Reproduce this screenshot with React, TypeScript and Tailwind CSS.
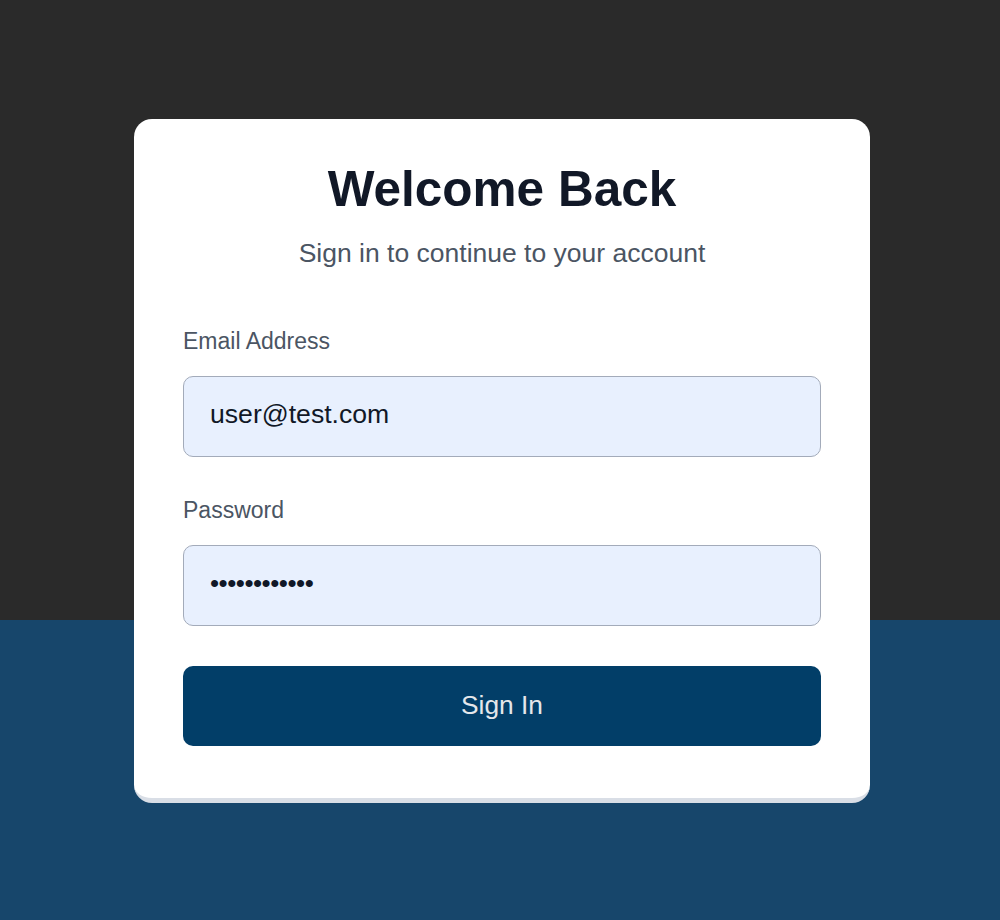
import React from 'react';

const App: React.FC = () => {
  return (
    <div className="min-h-[920px] w-full bg-[linear-gradient(to_bottom,#2a2a2a_620px,#17466b_620px)] pt-[119px] font-['Liberation_Sans',Arial,sans-serif]">
      {/* Login card */}
      <div className="ml-[134px] w-[736px] rounded-[18px] border-b-[5px] border-[#d9dee6] bg-white px-[49px] pt-[42px] pb-[52px]">
        <h1 className="text-center text-[49.5px] leading-[56px] font-bold text-[#111827]">Welcome Back</h1>
        <p className="mt-[21px] text-center text-[26.5px] leading-[30px] text-[#4b5563]">
          Sign in to continue to your account
        </p>

        <form className="mt-[59px]" onSubmit={(e) => e.preventDefault()}>
          <label className="block text-[23px] leading-[28px] text-[#4b5563]">Email Address</label>
          <input
            type="email"
            readOnly
            value="user@test.com"
            className="mt-[21px] block h-[81px] w-full rounded-[10px] border-[1.5px] border-[#a3abba] bg-[#e8f0fe] px-[26px] pb-[5px] text-[26.6px] text-[#111827] outline-none"
          />

          <label className="mt-[39px] block text-[23px] leading-[28px] text-[#4b5563]">Password</label>
          <input
            type="password"
            readOnly
            value="password1234"
            className="mt-[21px] block h-[81px] w-full rounded-[10px] border-[1.5px] border-[#a3abba] bg-[#e8f0fe] px-[26px] pb-[4px] text-[26px] tracking-[-0.5px] text-[#111827] outline-none"
          />

          <button
            type="submit"
            className="mt-[40px] block h-[80px] w-full rounded-[10px] bg-[#023e68] text-[26.3px] text-[#e5e7eb]"
          >
            Sign In
          </button>
        </form>
      </div>
    </div>
  );
};

export default App;
